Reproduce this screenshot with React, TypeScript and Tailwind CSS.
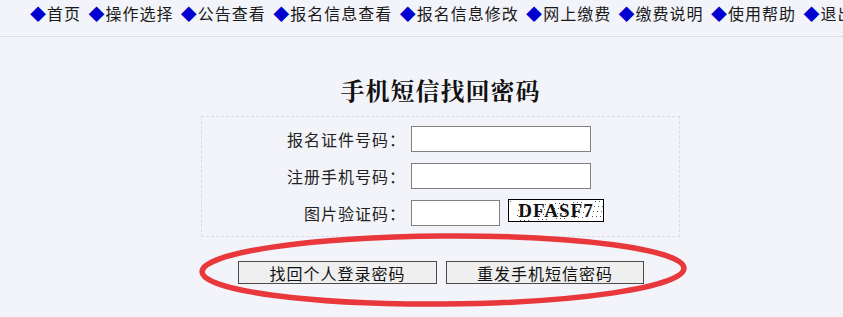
import React from 'react'

const navItems = ['首页', '操作选择', '公告查看', '报名信息查看', '报名信息修改', '网上缴费', '缴费说明', '使用帮助', '退出']

const cjk = { fontFamily: '"Noto Sans CJK SC", "Noto Sans", sans-serif' }

function Captcha() {
  const dots = Array.from({ length: 60 }, (_, i) => ({
    x: (i * 37) % 93 + 1,
    y: (i * 53) % 20 + 1,
  }))
  return (
    <div className="relative w-[96px] h-[23px] bg-white border border-black overflow-hidden flex items-center justify-center">
      <svg className="absolute inset-0" width="96" height="23">
        {dots.map((d, i) => (
          <rect key={i} x={d.x} y={d.y} width="1" height="1" fill="#555" />
        ))}
      </svg>
      <span
        className="relative text-[19px] font-bold tracking-[1px] text-[#111] leading-none"
        style={{ fontFamily: '"Liberation Serif", serif' }}
      >
        DFASF7
      </span>
    </div>
  )
}

function Row({ label, short, children }: { label: string; short?: boolean; children?: React.ReactNode }) {
  return (
    <div className="flex items-center">
      <div className="w-[204px] text-right text-[16px] tracking-[1px] text-[#222]">{label}</div>
      <input
        className={`ml-[5px] h-[26px] bg-white border border-[#808080] outline-none ${short ? 'w-[89px]' : 'w-[180px]'}`}
      />
      {children}
    </div>
  )
}

export default function App() {
  return (
    <div className="relative w-full h-[317px] bg-[#f3f4f9] overflow-hidden" style={cjk}>
      <div className="h-[37px] border-b border-[#dcdde8] pl-[30px] flex items-start pt-[2px] whitespace-nowrap gap-[7.4px] text-[16px] tracking-[1px] text-[#1a1a1a] leading-[22px] overflow-hidden">
        {navItems.map((t) => (
          <span key={t}>
            <span className="text-[#0000d0]">◆</span>
            {t}
          </span>
        ))}
      </div>

      <div className="ml-[201px] w-[479px]">
        <h1 className="mt-[38px] text-center text-[24px] font-bold leading-[30px] tracking-[1px] text-[#111]" style={{ fontFamily: '"Noto Serif CJK SC", "Noto Sans CJK SC", serif' }}>
          手机短信找回密码
        </h1>
        <div className="mt-[11px] h-[121px] border border-dashed border-[#d9dbe8] pt-[9px] flex flex-col gap-[11px]">
          <Row label="报名证件号码：" />
          <Row label="注册手机号码：" />
          <Row label="图片验证码：" short>
            <div className="ml-[8px] -mt-[5px]">
              <Captcha />
            </div>
          </Row>
        </div>
        <div className="mt-[24px] flex justify-center gap-[9px] pl-[1px]">
          <button className="w-[199px] h-[23px] bg-[#efefef] border border-[#4a4a4a] text-[16px] tracking-[1px] text-[#111] leading-none">
            找回个人登录密码
          </button>
          <button className="w-[198px] h-[23px] bg-[#efefef] border border-[#4a4a4a] text-[16px] tracking-[1px] text-[#111] leading-none">
            重发手机短信密码
          </button>
        </div>
      </div>

      <svg className="absolute left-[195px] top-[230px] pointer-events-none" width="500" height="82">
        <ellipse cx="248" cy="40" rx="241" ry="34" fill="none" stroke="#e8383c" strokeWidth="5.5" transform="rotate(-0.4 248 40)" />
      </svg>
    </div>
  )
}
